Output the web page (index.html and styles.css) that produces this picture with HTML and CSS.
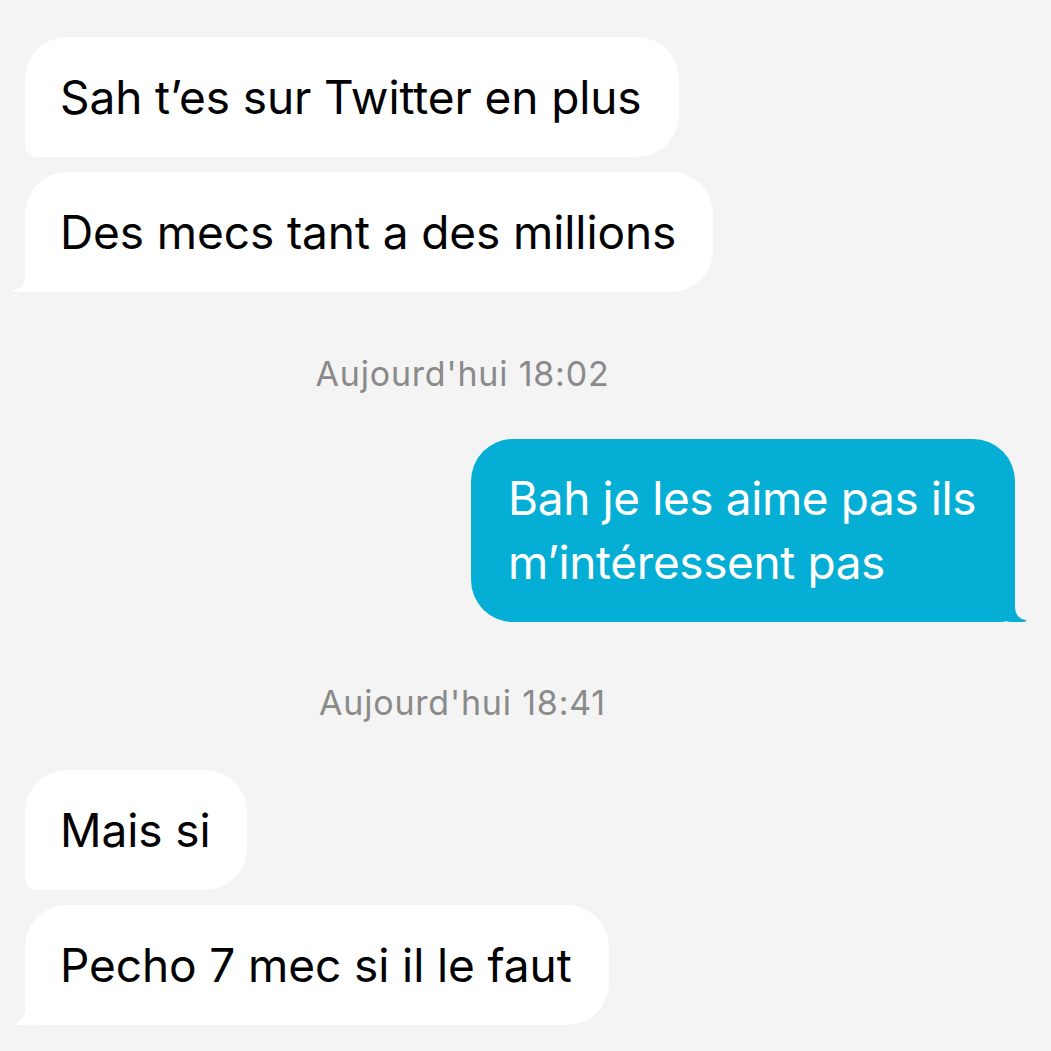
FILE: index.html
```html
<!DOCTYPE html>
<html lang="fr">
<head>
<meta charset="utf-8">
<link rel="stylesheet" href="styles.css">
</head>
<body>
<main class="chat">
  <div class="bubble in grouped">Sah t’es sur Twitter en plus</div>
  <div class="bubble in tail">Des mecs tant a des millions</div>
  <div class="stamp first">Aujourd'hui 18:02</div>
  <div class="bubble out tail">Bah je les aime pas ils m’intéressent pas</div>
  <div class="stamp second">Aujourd'hui 18:41</div>
  <div class="bubble in grouped">Mais si</div>
  <div class="bubble in tail">Pecho 7 mec si il le faut</div>
</main>
</body>
</html>
```
FILE: styles.css
```css
html, body {
  margin: 0;
  padding: 0;
  background: #f4f4f4;
}
body {
  font-family: Inter, "Liberation Sans", Arial, sans-serif;
  -webkit-font-smoothing: antialiased;
}
.chat {
  display: flex;
  flex-direction: column;
  padding: 37px 36px 0 25px;
  height: 1051px;
  box-sizing: border-box;
  overflow: hidden;
}
.bubble {
  position: relative;
  font-size: 46px;
  line-height: 64px;
  padding: 28px 37px 28px 35px;
  border-radius: 42px;
  color: #000;
  letter-spacing: -0.3px;
  white-space: nowrap;
}
.in {
  align-self: flex-start;
  background: #fff;
  letter-spacing: -0.1px;
}
.in.grouped {
  border-bottom-left-radius: 12px;
  margin-bottom: 15px;
}
.in.tail {
  border-bottom-left-radius: 14px;
}
.in.tail::before {
  content: "";
  position: absolute;
  left: -13px;
  bottom: 0;
  width: 30px;
  height: 22px;
  background: #fff;
  border-bottom-right-radius: 14px;
  border-bottom-left-radius: 4px;
}
.in.tail::after {
  content: "";
  position: absolute;
  left: -20px;
  bottom: 2px;
  width: 20px;
  height: 24px;
  background: #f4f4f4;
  border-bottom-right-radius: 12px;
}
.out {
  align-self: flex-end;
  background: #05aed5;
  color: #fff;
  white-space: normal;
  box-sizing: border-box;
  max-width: 544px;
  padding: 27px 34px 28px 37px;
  border-bottom-right-radius: 14px;
  letter-spacing: -0.4px;
}
.out.tail::before {
  content: "";
  position: absolute;
  right: -12px;
  bottom: 0;
  width: 30px;
  height: 22px;
  background: #05aed5;
  border-bottom-left-radius: 14px;
  border-bottom-right-radius: 4px;
}
.out.tail::after {
  content: "";
  position: absolute;
  right: -20px;
  bottom: 2px;
  width: 20px;
  height: 24px;
  background: #f4f4f4;
  border-bottom-left-radius: 12px;
}
.stamp {
  align-self: center;
  font-size: 34px;
  line-height: 40px;
  letter-spacing: 0.8px;
  color: #8a8a8a;
}
.stamp.first {
  margin: 62px 115px 45px 0;
}
.stamp.second {
  margin: 61px 115px 47px 0;
}
```
